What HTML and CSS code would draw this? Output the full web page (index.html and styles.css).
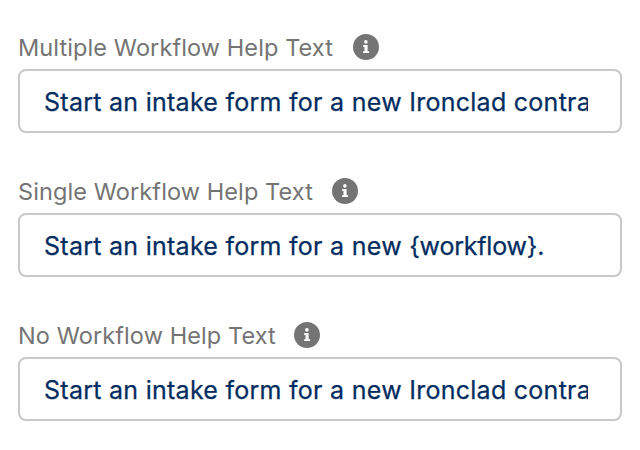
FILE: index.html
```
<!DOCTYPE html>
<html lang="en">
<head>
<meta charset="utf-8">
<title>Help Text</title>
<link rel="stylesheet" href="styles.css">
</head>
<body>
<main class="form">
  <section class="field">
    <div class="label"><span class="label-text multiple">Multiple Workflow Help Text</span><svg class="info" viewBox="0 0 26 26"><circle cx="13" cy="13" r="13"/><circle cx="12.9" cy="7.9" r="1.8"/><path d="M10.2 11h4.4v6.2h1.5v1.9h-6v-1.9h1.4v-4.3h-1.3z"/></svg></div>
    <div class="input"><div class="value">Start an intake form for a new Ironclad contra</div></div>
  </section>
  <section class="field">
    <div class="label"><span class="label-text single">Single Workflow Help Text</span><svg class="info" viewBox="0 0 26 26"><circle cx="13" cy="13" r="13"/><circle cx="12.9" cy="7.9" r="1.8"/><path d="M10.2 11h4.4v6.2h1.5v1.9h-6v-1.9h1.4v-4.3h-1.3z"/></svg></div>
    <div class="input"><div class="value">Start an intake form for a new <span class="token">{workflow}.</span></div></div>
  </section>
  <section class="field">
    <div class="label"><span class="label-text none">No Workflow Help Text</span><svg class="info" viewBox="0 0 26 26"><circle cx="13" cy="13" r="13"/><circle cx="12.9" cy="7.9" r="1.8"/><path d="M10.2 11h4.4v6.2h1.5v1.9h-6v-1.9h1.4v-4.3h-1.3z"/></svg></div>
    <div class="input"><div class="value">Start an intake form for a new Ironclad contra</div></div>
  </section>
</main>
</body>
</html>
```
FILE: styles.css
```
* { box-sizing: border-box; }
body { margin: 0; background: #fff; font-family: Inter, sans-serif; }
.form { display: grid; gap: 36px; padding: 25px 18px 0; }
.field { height: 108px; }
.label { display: flex; align-items: center; gap: 20px; height: 44px; color: #747474; font-size: 23.5px; line-height: 44px; }
.label-text { padding-top: 2px; letter-spacing: 0.1px; white-space: nowrap; }
.multiple { width: 315px; }
.single { width: 294px; }
.none { width: 256px; }
.info { width: 26px; height: 26px; fill: #747474; }
.info path, .info circle + circle { fill: #fff; }
.input { width: 604px; height: 64px; padding: 0 32px 0 24px; border: 2px solid #c9c9c9; border-radius: 8px; }
.value { overflow: hidden; color: #032d60; font-size: 25px; letter-spacing: 0.27px; line-height: 62px; white-space: nowrap; -webkit-text-stroke: 0.25px #032d60; }
.token { letter-spacing: -0.22px; }
```
